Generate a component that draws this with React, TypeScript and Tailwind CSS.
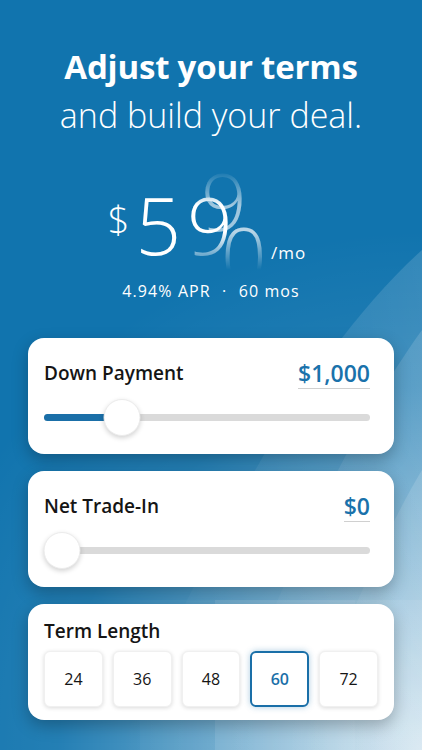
import { useState } from 'react'

const terms = [24, 36, 48, 60, 72]

function Backdrop() {
  return (
    <svg
      className="absolute inset-0 h-full w-full"
      viewBox="0 0 422 750"
      preserveAspectRatio="none"
    >
      <defs>
        <radialGradient id="glow" cx="422" cy="750" r="520" gradientUnits="userSpaceOnUse">
          <stop offset="0" stopColor="#ffffff" stopOpacity="0.75" />
          <stop offset="0.35" stopColor="#ffffff" stopOpacity="0.4" />
          <stop offset="0.7" stopColor="#ffffff" stopOpacity="0.08" />
          <stop offset="1" stopColor="#ffffff" stopOpacity="0" />
        </radialGradient>
        <linearGradient id="swoosh" x1="0" y1="0" x2="1" y2="0">
          <stop offset="0" stopColor="#ffffff" stopOpacity="0" />
          <stop offset="1" stopColor="#ffffff" stopOpacity="0.14" />
        </linearGradient>
      </defs>
      <rect x="0" y="0" width="422" height="750" fill="url(#glow)" />
      <path d="M120 750 C 200 560, 300 360, 422 250 L422 750 Z" fill="url(#swoosh)" />
      <path d="M220 750 C 280 580, 350 430, 422 330 L422 750 Z" fill="url(#swoosh)" />
      <path d="M300 750 C 340 640, 380 540, 422 470 L422 750 Z" fill="url(#swoosh)" />
      <rect x="140" y="600" width="75" height="150" fill="#ffffff" fillOpacity="0.03" />
      <rect x="215" y="600" width="70" height="150" fill="#ffffff" fillOpacity="0.12" />
      <rect x="285" y="600" width="70" height="150" fill="#ffffff" fillOpacity="0.12" />
      <rect x="355" y="600" width="67" height="150" fill="#ffffff" fillOpacity="0.08" />
    </svg>
  )
}

function AmountCard({
  label,
  amount,
  pct,
}: {
  label: string
  amount: string
  pct: number
}) {
  return (
    <div className="h-[116px] rounded-[16px] bg-white pb-[17px] pl-4 pr-6 pt-[20px] shadow-[0_6px_16px_rgba(0,0,0,0.25)]">
      <div className="flex h-[30px] items-center justify-between">
        <span className="text-[19px] font-semibold text-[#151515]">{label}</span>
        <span className="border-b-[1.5px] border-[#d0d0d0] text-[23px] font-semibold leading-[30px] text-[#1a72ab]">
          {amount}
        </span>
      </div>
      <div className="relative mt-[11px] h-[36px]">
        <div className="absolute left-0 right-0 top-[15px] h-[7px] rounded-full bg-[#dadada]" />
        <div
          className="absolute left-0 top-[15px] h-[7px] rounded-full bg-[#1a6fa8]"
          style={{ width: `${pct}%` }}
        />
        <div
          className="absolute top-0 h-[37px] w-[37px] -translate-x-1/2 rounded-full border border-[#ececec] bg-white shadow-[0_2px_5px_rgba(0,0,0,0.18)]"
          style={{ left: `calc(${pct}% + ${pct === 0 ? 18 : 0}px)` }}
        />
      </div>
    </div>
  )
}

export default function App() {
  const [term, setTerm] = useState(60)

  return (
    <div
      className="relative h-[750px] w-full overflow-hidden bg-[#1174ae] text-white"
      style={{ fontFamily: '"Open Sans", "Noto Sans", sans-serif' }}
    >
      <Backdrop />
      <div className="relative flex flex-col">
        <header className="pt-[43px] text-center">
          <h1 className="text-[33px] font-bold leading-[48px] tracking-[-0.2px]">Adjust your terms</h1>
          <p className="text-[34px] font-light leading-[48px]">and build your deal.</p>
        </header>

        <div className="mt-[31px] flex h-[100px] items-start justify-center pr-[8px]">
          <span className="mr-[6px] mt-[30px] text-[38px] font-light leading-[38px]">$</span>
          <span className="mt-[14px] text-[80px] font-extralight leading-[80px]">5</span>
          <div className="relative ml-[6px] h-[100px] w-[84px] overflow-hidden [mask-image:linear-gradient(to_bottom,transparent_0%,black_35%,black_62%,transparent_100%)]">
            <span className="absolute left-[14px] top-[-10px] text-[80px] font-extralight leading-[80px] opacity-60">9</span>
            <span className="absolute left-0 top-[14px] text-[80px] font-extralight leading-[80px]">9</span>
            <span className="absolute left-[34px] top-[44px] text-[80px] font-extralight leading-[80px] opacity-70">0</span>
          </div>
          <span className="mt-[74px] text-[17px] leading-none tracking-[1px]">/mo</span>
        </div>

        <p className="mt-[10px] text-center text-[16px] leading-[22px] tracking-[1.1px]">
          4.94% APR <span className="mx-[6px]">·</span> 60 mos
        </p>

        <div className="mx-[28px] mt-[36px] flex flex-col gap-[17px] text-[#151515]">
          <AmountCard label="Down Payment" amount="$1,000" pct={24} />
          <AmountCard label="Net Trade-In" amount="$0" pct={0} />

          <div className="h-[116px] rounded-[16px] bg-white px-4 pt-[14px] shadow-[0_6px_16px_rgba(0,0,0,0.25)]">
            <div className="text-[19px] font-semibold leading-[26px]">Term Length</div>
            <div className="mt-[7px] grid grid-cols-5 gap-[10px]">
              {terms.map((t) => {
                const active = t === term
                return (
                  <button
                    key={t}
                    onClick={() => setTerm(t)}
                    className={
                      active
                        ? 'flex h-[56px] items-center justify-center rounded-[6px] border-2 border-[#1a6fa8] bg-white text-[16px] font-semibold text-[#1a6fa8] shadow-[0_0_6px_rgba(26,111,168,0.35)]'
                        : 'flex h-[56px] items-center justify-center rounded-[6px] border border-[#f0f0f0] bg-white text-[16px] text-[#151515] shadow-[0_1px_4px_rgba(0,0,0,0.15)]'
                    }
                  >
                    {t}
                  </button>
                )
              })}
            </div>
          </div>
        </div>
      </div>
    </div>
  )
}
